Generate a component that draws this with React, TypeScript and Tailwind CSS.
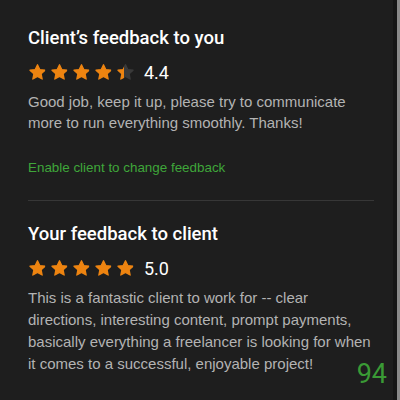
import React from "react"

const STAR = "M12 2.2l2.9 6.1 6.6.8-4.9 4.6 1.3 6.6L12 17l-5.9 3.3 1.3-6.6L2.5 9.1l6.6-.8z"
const heading = { fontFamily: "Roboto, 'Liberation Sans', sans-serif" }

function Star({ fill = 1, id }: { fill?: number; id: string }) {
  return (
    <svg width="19" height="19" viewBox="0 0 24 24" className="shrink-0">
      <defs>
        <linearGradient id={id}>
          <stop offset={`${fill * 100}%`} stopColor="#ee8410" />
          <stop offset={`${fill * 100}%`} stopColor="#3a3a3a" />
        </linearGradient>
      </defs>
      <path d={STAR} fill={`url(#${id})`} stroke={`url(#${id})`} strokeWidth="1.6" strokeLinejoin="round" />
    </svg>
  )
}

function Rating({ value, name }: { value: number; name: string }) {
  return (
    <div className="flex items-center gap-[3px]">
      {[0, 1, 2, 3, 4].map((i) => (
        <Star key={i} id={`${name}-${i}`} fill={Math.max(0, Math.min(1, value - i))} />
      ))}
      <span className="ml-[6px] text-[18px] text-white leading-none" style={heading}>
        {value.toFixed(1)}
      </span>
    </div>
  )
}

export default function App() {
  return (
    <div
      className="w-[400px] h-[400px] bg-[#1e1e1e] flex overflow-hidden"
      style={{ fontFamily: '"Liberation Sans", Arial, sans-serif' }}
    >
      <div className="flex-1 pl-[28px] pr-[22px] pt-[27px] relative">
        <h2 className="text-[18.5px] font-medium text-white leading-[22px]" style={heading}>
          Client’s feedback to you
        </h2>
        <div className="mt-[14px]">
          <Rating value={4.4} name="client" />
        </div>
        <p className="mt-[9px] text-[15px] leading-[21px] text-[#b3b3b3]">
          Good job, keep it up, please try to communicate more to run everything smoothly. Thanks!
        </p>
        <div className="mt-[27px] text-[13.4px] leading-[16px] text-[#3fa63a]">Enable client to change feedback</div>
        <div className="mt-[24px] h-px bg-[#373737] mr-[-3px]" />

        <h2 className="mt-[22px] text-[18.5px] font-medium text-white leading-[22px]" style={heading}>
          Your feedback to client
        </h2>
        <div className="mt-[14px]">
          <Rating value={5} name="you" />
        </div>
        <p className="mt-[9px] text-[15px] leading-[22px] text-[#b3b3b3]">
          This is a fantastic client to work for -- clear directions, interesting content, prompt payments,
          basically everything a freelancer is looking for when it comes to a successful, enjoyable project!
        </p>
        <span className="absolute right-[6px] bottom-[12px] text-[27px] leading-none text-[#3a9a35]" style={heading}>
          94
        </span>
      </div>
      <div className="w-[4px] bg-[#161616]" />
      <div className="w-[3px] bg-[#8a8a8a]" />
    </div>
  )
}
